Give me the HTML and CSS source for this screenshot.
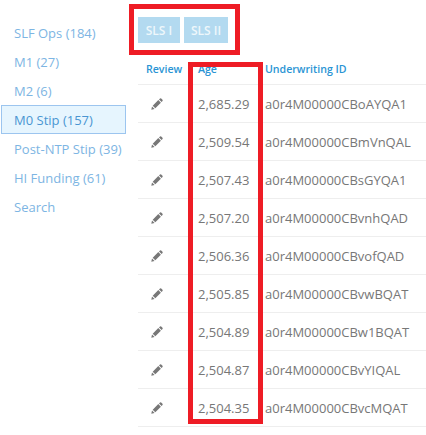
FILE: index.html
```html
<!DOCTYPE html>
<html lang="en">
<head>
<meta charset="utf-8">
<title>Underwriting queue</title>
<link rel="stylesheet" href="styles.css">
</head>
<body>
<svg class="defs" width="0" height="0" aria-hidden="true">
  <symbol id="pencil" viewBox="0 0 12 12">
    <path d="M0.3 11.7 L1 8.4 L3.6 11 Z M1.7 7.7 L7.3 2.1 L9.9 4.7 L4.3 10.3 Z M8 1.4 L9 .5 Q9.6 0 10.2 .5 L11.5 1.8 Q12 2.4 11.5 3 L10.6 4 Z"/>
  </symbol>
</svg>
<div class="page">
  <nav class="side">
    <a class="side-item">SLF Ops (184)</a>
    <a class="side-item">M1 (27)</a>
    <a class="side-item">M2 (6)</a>
    <a class="side-item active">M0 Stip (157)</a>
    <a class="side-item">Post-NTP Stip (39)</a>
    <a class="side-item">HI Funding (61)</a>
    <a class="side-item">Search</a>
  </nav>
  <main class="content">
    <div class="tabs">
      <button class="tab">SLS I</button>
      <button class="tab">SLS II</button>
    </div>
    <table class="grid">
      <thead>
        <tr><th class="c-review">Review</th><th class="c-age">Age</th><th>Underwriting ID</th></tr>
      </thead>
      <tbody>
        <tr><td class="c-review"><svg class="pen"><use href="#pencil"/></svg></td><td class="c-age">2,685.29</td><td>a0r4M00000CBoAYQA1</td></tr>
        <tr><td class="c-review"><svg class="pen"><use href="#pencil"/></svg></td><td class="c-age">2,509.54</td><td>a0r4M00000CBmVnQAL</td></tr>
        <tr><td class="c-review"><svg class="pen"><use href="#pencil"/></svg></td><td class="c-age">2,507.43</td><td>a0r4M00000CBsGYQA1</td></tr>
        <tr><td class="c-review"><svg class="pen"><use href="#pencil"/></svg></td><td class="c-age">2,507.20</td><td>a0r4M00000CBvnhQAD</td></tr>
        <tr><td class="c-review"><svg class="pen"><use href="#pencil"/></svg></td><td class="c-age">2,506.36</td><td>a0r4M00000CBvofQAD</td></tr>
        <tr><td class="c-review"><svg class="pen"><use href="#pencil"/></svg></td><td class="c-age">2,505.85</td><td>a0r4M00000CBvwBQAT</td></tr>
        <tr><td class="c-review"><svg class="pen"><use href="#pencil"/></svg></td><td class="c-age">2,504.89</td><td>a0r4M00000CBw1BQAT</td></tr>
        <tr><td class="c-review"><svg class="pen"><use href="#pencil"/></svg></td><td class="c-age">2,504.87</td><td>a0r4M00000CBvYIQAL</td></tr>
        <tr><td class="c-review"><svg class="pen"><use href="#pencil"/></svg></td><td class="c-age">2,504.35</td><td>a0r4M00000CBvcMQAT</td></tr>
      </tbody>
    </table>
  </main>
</div>
<div class="mark mark-tabs"></div>
<div class="mark mark-age"></div>
</body>
</html>
```
FILE: styles.css
```css
* { box-sizing: border-box; }
html, body { margin: 0; height: 100%; overflow: hidden; background: #fff; }
body { font-family: "Open Sans", sans-serif; font-size: 13px; color: #777; position: relative; }
.defs { position: absolute; }
.page { display: flex; align-items: flex-start; padding-left: 1px; }

.side { width: 125px; flex: none; padding-top: 18px; margin-right: 12px; }
.side-item { display: flex; align-items: center; height: 29px; padding-left: 12px; font-size: 13px; color: #7db5e3; border: 1px solid transparent; }
.side-item.active { color: #4a95d2; background: #e6f5fe; border-color: #9cc5ef; }

.content { flex: 1; min-width: 0; padding-top: 17px; }
.tabs { display: flex; gap: 4px; height: 26px; }
.tab { height: 26px; padding: 0; border: 0; background: #b3daf0; color: #eef7fb; font: 600 12px "Open Sans", sans-serif; width: 42px; }
.tab + .tab { width: 44px; }

.grid { width: 100%; margin-top: 16px; border-collapse: collapse; table-layout: fixed; }
.grid th { height: 25px; padding: 0 0 5px; text-align: left; font-size: 10.6px; font-weight: 600; color: #2a94d4; border-bottom: 1px solid #eee; }
.grid td { height: 38px; padding: 1px 0 0; font-size: 13px; color: #777; border-bottom: 1px solid #eee; }
.c-review { width: 60px; padding-left: 8px !important; }
.c-age { width: 67px; }
.pen { display: block; width: 12px; height: 12px; margin-left: 5px; fill: #777; }

.mark { position: absolute; border: 5px solid #ee1c25; pointer-events: none; }
.mark-tabs { left: 129px; top: 4px; width: 111px; height: 51px; }
.mark-age { left: 188px; top: 62px; width: 75px; height: 362px; }
```
